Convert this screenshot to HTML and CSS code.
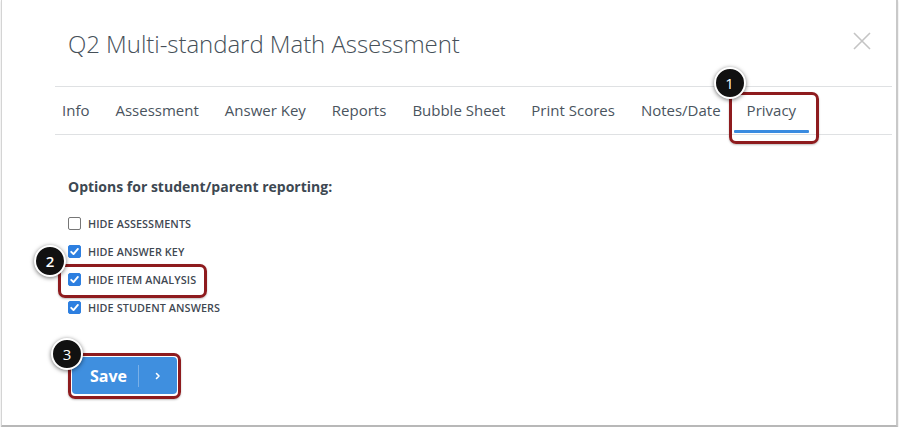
FILE: index.html
```html
<!DOCTYPE html>
<html>
<head>
<meta charset="utf-8">
<link rel="stylesheet" href="styles.css">
</head>
<body>
<div class="modal">
  <header class="modal-header">
    <h1 class="title">Q2 Multi-standard Math Assessment</h1>
    <button class="close" aria-label="Close">
      <svg width="18" height="18" viewBox="0 0 18 18"><path d="M1 1L17 17M17 1L1 17" stroke="#c4c4c4" stroke-width="1.6" fill="none"/></svg>
    </button>
  </header>
  <nav class="tabs">
    <a class="tab first">Info</a>
    <a class="tab">Assessment</a>
    <a class="tab">Answer Key</a>
    <a class="tab">Reports</a>
    <a class="tab">Bubble Sheet</a>
    <a class="tab">Print Scores</a>
    <a class="tab">Notes/Date</a>
    <a class="tab active">Privacy<span class="callout callout-tab"></span><span class="badge badge-1">1</span></a>
  </nav>
  <section class="body">
    <h2 class="heading">Options for student/parent reporting:</h2>
    <ul class="options">
      <li class="option"><span class="box"></span>HIDE ASSESSMENTS</li>
      <li class="option"><span class="box checked"><svg viewBox="0 0 13 13" width="13" height="13"><path d="M3.2 6.8L5.5 9.1L9.9 3.9" stroke="#fff" stroke-width="1.9" fill="none" stroke-linecap="round" stroke-linejoin="round"/></svg></span>HIDE ANSWER KEY</li>
      <li class="option marked"><span class="box checked"><svg viewBox="0 0 13 13" width="13" height="13"><path d="M3.2 6.8L5.5 9.1L9.9 3.9" stroke="#fff" stroke-width="1.9" fill="none" stroke-linecap="round" stroke-linejoin="round"/></svg></span>HIDE ITEM ANALYSIS<span class="callout callout-option"></span><span class="badge badge-2">2</span></li>
      <li class="option"><span class="box checked"><svg viewBox="0 0 13 13" width="13" height="13"><path d="M3.2 6.8L5.5 9.1L9.9 3.9" stroke="#fff" stroke-width="1.9" fill="none" stroke-linecap="round" stroke-linejoin="round"/></svg></span>HIDE STUDENT ANSWERS</li>
    </ul>
    <div class="save-wrap">
      <button class="save"><span class="save-label">Save</span><span class="save-sep"></span><span class="save-arrow"><svg width="8" height="8" viewBox="0 0 8 8"><path d="M2.5 1.5L5 4L2.5 6.5" stroke="#fff" stroke-width="1.6" fill="none" stroke-linecap="round" stroke-linejoin="round"/></svg></span></button>
      <span class="callout callout-save"></span>
      <span class="badge badge-3">3</span>
    </div>
  </section>
</div>
</body>
</html>
```

FILE: styles.css
```css
* { box-sizing: border-box; }
html, body { margin: 0; padding: 0; background: #fff; }
body {
  font-family: "Open Sans", "Noto Sans", sans-serif;
  color: #3e4852;
}
.modal {
  position: relative;
  margin-left: 1px;
  width: 897px;
  height: 427px;
  background: #fff;
  border-left: 1px solid #d4d4d4;
  border-right: 2px solid #c9c9c9;
  border-bottom: 2px solid #b8b8b8;
  box-shadow: 0 1px 2px rgba(0,0,0,0.15);
}
.modal-header {
  display: flex;
  align-items: flex-start;
  justify-content: space-between;
  padding: 28px 25px 0 66px;
  height: 86px;
}
.title {
  margin: 0;
  font-size: 24px;
  font-weight: 300;
  line-height: 32px;
  color: #465059;
  letter-spacing: -0.05px;
}
.close {
  margin-top: 4px;
  border: 0;
  background: none;
  padding: 0;
  width: 18px;
  height: 18px;
  display: block;
}
.tabs {
  display: flex;
  margin-left: 53px;
  width: 837px;
  height: 49px;
  border-top: 1px solid #dfe1e3;
  border-bottom: 1px solid #dfe1e3;
}
.tab {
  position: relative;
  display: block;
  padding: 1px 13px 0;
  font-size: 15px;
  line-height: 45px;
  color: #4a545e;
}
.tab.first { padding-left: 7px; }
.tab.active::after {
  content: "";
  position: absolute;
  left: 0;
  right: 0;
  bottom: 1px;
  height: 3px;
  background: #3a8be0;
  border-radius: 1px;
}
.callout {
  position: absolute;
  border: 3px solid #8e1b1e;
  border-radius: 7px;
  box-shadow: 0 1px 2px rgba(0,0,0,0.25);
  pointer-events: none;
}
.callout-tab { left: -5px; right: -10px; top: 5px; bottom: -10px; }
.badge {
  position: absolute;
  width: 32px;
  height: 32px;
  border-radius: 50%;
  background: #111;
  border: 2px solid #fff;
  box-shadow: 0 1px 4px rgba(0,0,0,0.55);
  color: #fff;
  font-size: 15px;
  line-height: 28px;
  text-align: center;
  font-family: "Open Sans", sans-serif;
  z-index: 2;
}
.badge-1 { left: -20px; top: -20px; }
.body { padding: 43px 0 0 66px; }
.heading {
  margin: 0 0 13px;
  font-size: 14px;
  font-weight: 700;
  line-height: 18px;
  color: #3d4852;
}
.options { list-style: none; margin: 0; padding: 0; }
.option {
  position: relative;
  display: flex;
  align-items: center;
  height: 28px;
  font-size: 10.8px;
  font-weight: 600;
  color: #3f4852;
  letter-spacing: 0.1px;
}
.box {
  width: 13px;
  height: 13px;
  margin-right: 7px;
  border: 1px solid #767676;
  border-radius: 2px;
  background: #fff;
  display: flex;
}
.box.checked { background: #2d7fe0; border-color: #2d7fe0; }
.box.checked svg { margin: -1px; }
.callout-option { left: -10px; width: 149px; top: -1px; height: 34px; }
.badge-2 { left: -34px; top: -20px; }
.save-wrap {
  position: relative;
  margin: 36px 0 0 4px;
  width: 105px;
}
.save {
  display: flex;
  align-items: center;
  width: 105px;
  height: 37px;
  padding: 0;
  border: 0;
  border-radius: 4px;
  background: #3f8fdf;
  color: #fff;
  font-family: "Open Sans", sans-serif;
  font-size: 16px;
  font-weight: 700;
}
.save-label { padding-left: 18px; width: 66px; text-align: left; }
.save-sep { width: 1px; height: 22px; background: rgba(255,255,255,0.3); }
.save-arrow { flex: 1; display: flex; justify-content: center; }
.callout-save { left: -4px; right: -4px; top: -4px; bottom: -5px; }
.badge-3 { left: -21px; top: -19px; }
```
